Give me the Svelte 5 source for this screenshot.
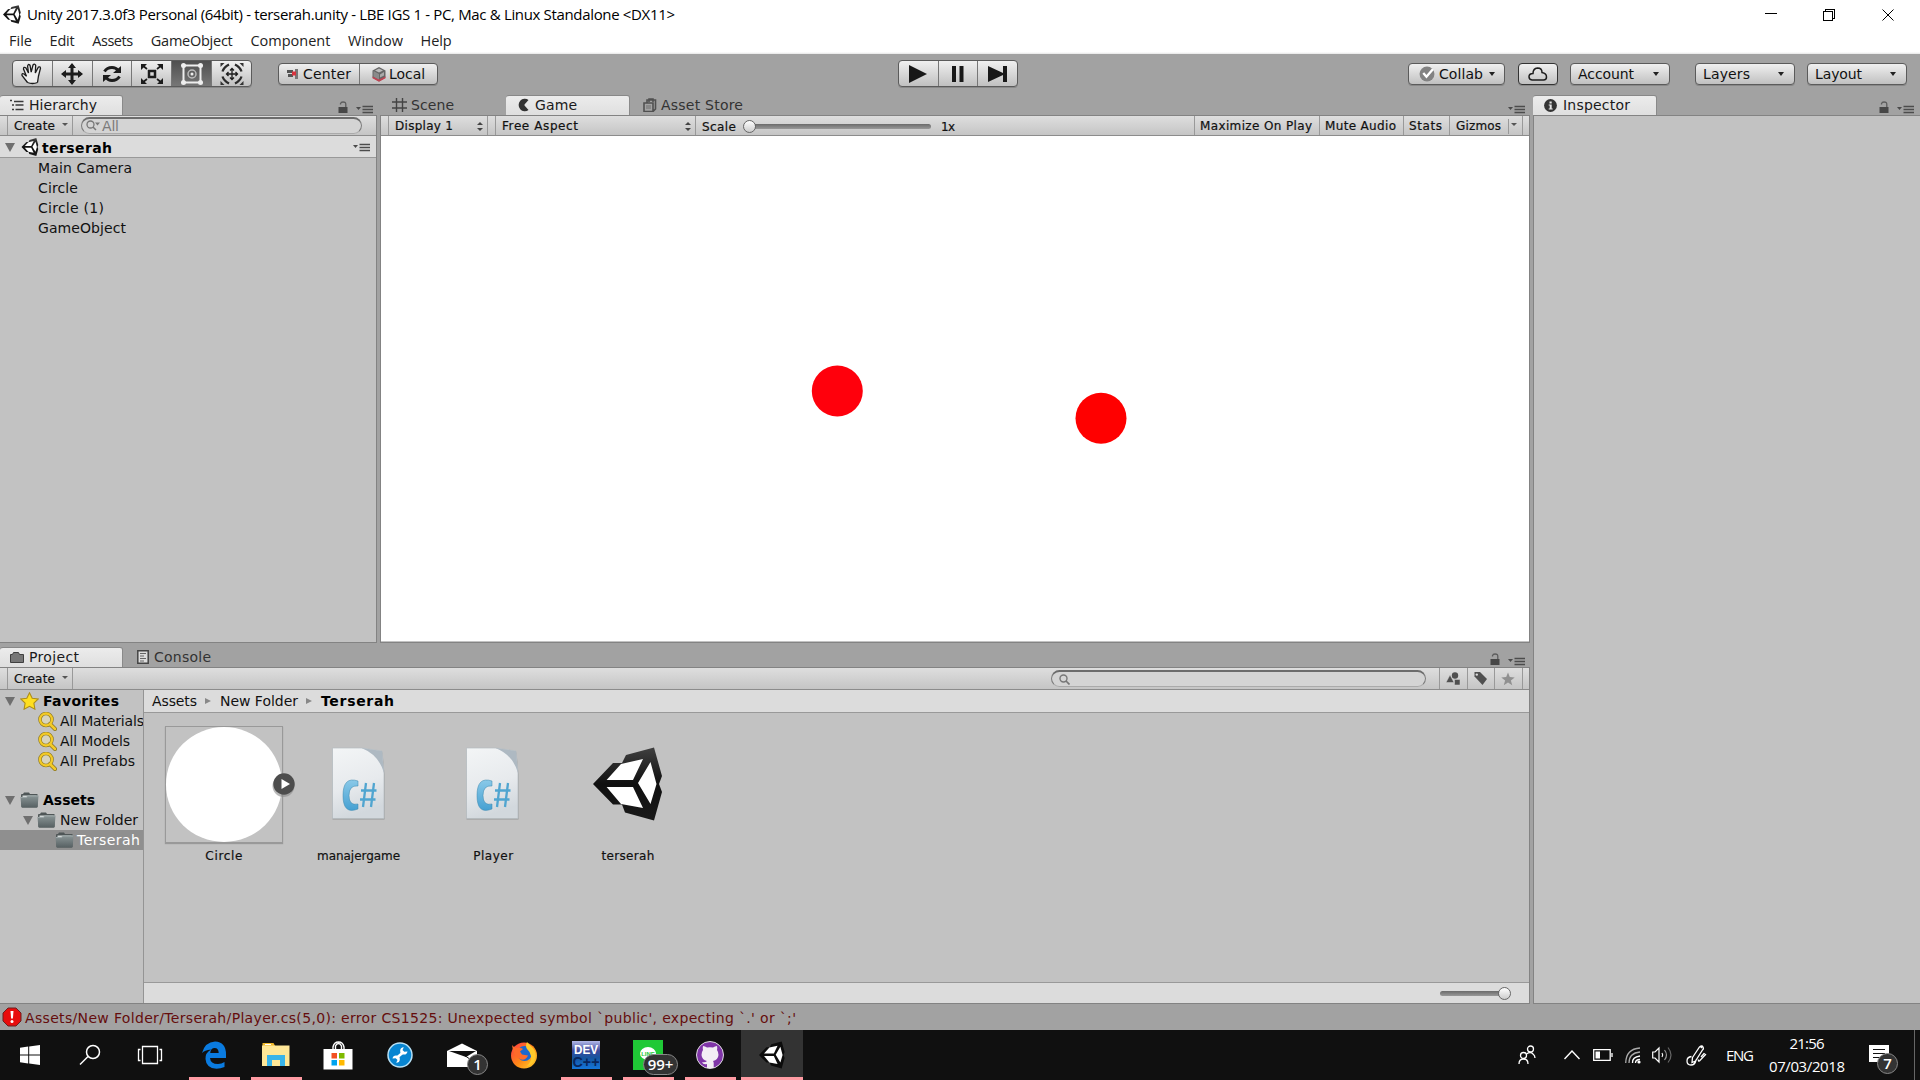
<script>
  // Spreads a label's letters so that it occupies the given width.
  function fit(node, width) {
    const count = [...node.textContent].length;
    const natural = node.getBoundingClientRect().width;
    if (count > 1) node.style.letterSpacing = `${(width - natural) / (count - 1)}px`;
    node.style.width = `${width}px`;
  }

  const menus = [['File', 23], ['Edit', 25], ['Assets', 41], ['GameObject', 82], ['Component', 80], ['Window', 55], ['Help', 31]];
  const tools = ['hand', 'move', 'rotate', 'scale', 'rect', 'transform'];
  const objects = [['Main Camera', 94], ['Circle', 40], ['Circle (1)', 66], ['GameObject', 88]];
  const searches = [['All Materials', 84], ['All Models', 70], ['All Prefabs', 75]];
  const assets = [
    ['Circle', 37, 'sprite'],
    ['manajergame', 83, 'script'],
    ['Player', 40, 'script'],
    ['terserah', 53, 'scene']
  ];
  const playIcons = ['play', 'pause', 'step'];
</script>

{#snippet label(text, width, cls = '')}
  <span class="label {cls}" use:fit={width}>{text}</span>
{/snippet}

{#snippet logo(cls)}
  <svg class={cls} viewBox="0 0 70 74">
    <defs><linearGradient id="logoShade" x1="0" y1="0" x2="0" y2="1"><stop offset="0" stop-color="#404040" /><stop offset=".5" stop-color="#101010" /><stop offset="1" stop-color="#1a1a1a" /></linearGradient></defs>
    <path d="M0 37 20 16h9l4-8L61 .5l8 28.500-3 8 3 8-8 28.500-29-8-3-8h-9z" fill="url(#logoShade)" />
    <path d="M13.600 33 28 17l22-5-10 21zM57.500 15l6 22-6 20L45 36zM13.600 40H40l10 21-22-4z" fill="#fff" />
  </svg>
{/snippet}

{#snippet paneMenu()}
  <svg class="pane-menu" width="17" height="9" viewBox="0 0 17 9"><path d="M0 2h5L2.500 5z" fill="#4a4a4a" /><path d="M6.500 1.500H17M6.500 4.500H17M6.500 7.500H17" stroke="#4c4c4c" stroke-width="1.400" /></svg>
{/snippet}

{#snippet lock()}
  <svg class="lock" width="10" height="12" viewBox="0 0 10 12"><path d="M.5 6h9v6h-9z" fill="#474747" /><path d="M2.500 3.500V2.600Q3 1 5 1q2.800 0 2.800 2.500V6" fill="none" stroke="#5c5c5c" stroke-width="1.300" /></svg>
{/snippet}

{#snippet folder(cls)}
  <svg class={cls} width="19" height="16" viewBox="0 0 19 16"><path d="M1 3q0-1 1-1h1l1-1.500h5L10 2h7.500v12.500q0 1-1 1H2.500q-1 0-1-1z" fill="#4f5657" /><path d="M2.500 3.500h14v2h-14z" fill="#d2d8d8" /><path d="M.5 5h6l1-1.500h11l-.8 11q0 1-1 1H2.300q-1 0-1-1z" fill="url(#folderFill)" /><path d="M1 5.500h5.700l1-1.500h10.300" fill="none" stroke="#a8b1b2" stroke-width=".7" /></svg>
{/snippet}

<div class="screen">
  <svg class="defs" width="0" height="0"><defs>
    <linearGradient id="folderFill" x1="0" y1="0" x2="0" y2="1"><stop offset="0" stop-color="#8b9697" /><stop offset="1" stop-color="#566062" /></linearGradient>
    <linearGradient id="paper" x1="0" y1="0" x2=".25" y2="1"><stop offset="0" stop-color="#f3f5f6" /><stop offset=".6" stop-color="#e7eaed" /><stop offset="1" stop-color="#d2d8dd" /></linearGradient>
    <linearGradient id="sharp" x1="0" y1="0" x2="0" y2="1"><stop offset="0" stop-color="#8ac9e8" /><stop offset="1" stop-color="#45a0d2" /></linearGradient>
    <linearGradient id="fox" x1="0" y1="0" x2="1" y2="1"><stop offset="0" stop-color="#ff3647" /><stop offset=".55" stop-color="#ff8a16" /><stop offset="1" stop-color="#ffd52e" /></linearGradient>
    <linearGradient id="dev" x1="0" y1="0" x2="0" y2="1"><stop offset="0" stop-color="#b3b9e8" /><stop offset=".35" stop-color="#3d4a9c" /><stop offset=".6" stop-color="#16559f" /><stop offset="1" stop-color="#1476da" /></linearGradient>
  </defs></svg>

  <header class="titlebar">
    {@render logo('app-logo')}
    {@render label('Unity 2017.3.0f3 Personal (64bit) - terserah.unity - LBE IGS 1 - PC, Mac & Linux Standalone <DX11>', 648)}
    <svg class="window-buttons" width="130" height="14" viewBox="0 0 130 14" fill="none" stroke="#000" shape-rendering="crispEdges">
      <path d="M0 6.500h12M58.500 4.500h9v9h-9zM60.500 4.500v-2h9v9h-2" /><path d="m117.500 2.500 11 11m0-11-11 11" shape-rendering="auto" />
    </svg>
  </header>
  <nav class="menubar">
    {#each menus as [name, width]}{@render label(name, width)}{/each}
  </nav>

  <div class="toolbar">
    <div class="button-group tools">
      {#each tools as tool}
        <button class:active={tool === 'rect'} aria-label={tool}>
          <svg width="24" height="24" viewBox="0 0 24 24" fill="none" stroke="#1c1c1c" stroke-width="2">
            {#if tool === 'hand'}
              <path d="M7.500 20.500 2 13.500q-.5-2.500 2-1.500l2.500 2.200L3.500 7q0-2.500 2.300-1.200L8.500 11 7.600 4q.4-2.500 2.400-.8l1.200 7L13 3q1.500-2 2.700.2L15.300 11l3-5.800q2-1 2.200 1L18.500 14l-1 6.500M7.500 20.500q5 2 10 0" stroke-width="1.300" fill="#ededed" />
            {:else if tool === 'move'}
              <path d="M12 3v18M3 12h18" stroke-width="3" /><path d="m12 1 4 5H8zM12 23l-4-5h8zM1 12l5-4v8zM23 12l-5 4V8z" fill="#1c1c1c" stroke="none" />
            {:else if tool === 'rotate'}
              <path d="M4.500 9.500Q7 5.500 12 5.500q4 0 6 3M19.500 14.500Q17 18.500 12 18.500q-4 0-6-3" stroke-width="3" /><path d="M21 4v7h-8zM3 20v-7h8z" fill="#1c1c1c" stroke="none" />
            {:else if tool === 'scale'}
              <path d="M9 9h6v6H9z" stroke-width="2.500" /><path d="m2 3 5 4M22 3l-5 4M2 21l5-4M22 21l-5-4" stroke-width="1.700" /><path d="M1 2h6L1 8zM23 2v6l-6-6zM1 22v-6l6 6zM23 22h-6l6-6z" fill="#1c1c1c" stroke="none" />
            {:else if tool === 'rect'}
              <path d="M3.500 3.500h17v17h-17z" stroke="#eee" /><circle cx="12" cy="12" r="4" stroke="#bbb" stroke-width="1.500" /><circle cx="12" cy="12" r="1.500" fill="#eee" stroke="none" /><g fill="#eee" stroke="none"><circle cx="3.500" cy="3.500" r="2.500" /><circle cx="20.500" cy="3.500" r="2.500" /><circle cx="3.500" cy="20.500" r="2.500" /><circle cx="20.500" cy="20.500" r="2.500" /></g>
            {:else}
              <path d="M12 6.500v11M6.500 12h11M10 8.500l2-2 2 2M10 15.500l2 2 2-2M8.500 10l-2 2 2 2M15.500 10l2 2-2 2" stroke-width="1.300" /><path d="M2.500 9.500Q4 5 9 2.500M15 2.500q5 2.500 6.500 7M21.500 14.500q-1.500 4.500-6.500 7M9 21.500q-5-2.500-6.500-7" stroke-width="2.300" stroke="#2b2b2b" /><path d="M.5 1h4l-4 4zM23.500 1v4l-4-4zM.5 23v-4l4 4zM23.500 23h-4l4-4z" fill="#333" stroke="none" />
            {/if}
          </svg>
        </button>
      {/each}
    </div>
    <div class="button-group pivots">
      <button>
        <svg width="13" height="12" viewBox="0 0 13 12"><path d="M0 2h6v3H0zM1 6h5v3H1z" fill="#555" /><path d="M8 1h3v10H8z" fill="#777" /><path d="M5 3.500h4v4H5z" fill="#d8333e" /></svg>
        {@render label('Center', 48)}
      </button>
      <button>
        <svg width="14" height="15" viewBox="0 0 14 15"><path d="m7 0 6.500 3.500v7L7 14.500.5 10.500v-7z" fill="#666" /><path d="M1.500 4 7 7v6L1.500 9.800z" fill="#8a8a8a" /><path d="M3 3.500 7 1.500l4 2-4 2z" fill="#bbb" /><path d="M8 7.500 12 5v3.500L8 10.500z" fill="#aaa" /><path d="m.5 9.500 6.500 3 6.500-3v1.700L7 14.700.5 11.200z" fill="#bf4453" /></svg>
        {@render label('Local', 36)}
      </button>
    </div>
    <div class="button-group play">
      {#each playIcons as name}
        <button aria-label={name}>
          <svg width="22" height="20" viewBox="0 0 22 20" fill="#181818">
            {#if name === 'play'}<path d="m2 1 18 9-18 9z" />
            {:else if name === 'pause'}<path d="M5 2h4v16H5zM12.500 2h4v16h-4z" />
            {:else}<path d="M1 2v16l15-7v7h4V2h-4v7z" />{/if}
          </svg>
        </button>
      {/each}
    </div>
    <div class="account-tools">
      <button class="popup collab">
        <svg width="16" height="16" viewBox="0 0 15 15"><circle cx="7.500" cy="7.500" r="7" fill="#828282" /><path d="m4 6.500 3 3.500 6-7" fill="none" stroke="#fff" stroke-width="2.200" /></svg>
        {@render label('Collab', 44)}<i class="caret"></i>
      </button>
      <button class="popup cloud" aria-label="Cloud"><svg width="20" height="14" viewBox="0 0 20 14"><path d="M4 13q-3-.5-3-3.300 0-3 4-3.200 0-5 4.500-5.500Q14 1 14 5.500q4.500.8 4.500 4.500 0 3-3 3z" fill="none" stroke="#1d1d1d" stroke-width="1.500" /></svg></button>
      <button class="popup account">{@render label('Account', 56)}<i class="caret"></i></button>
      <button class="popup layers">{@render label('Layers', 47)}<i class="caret"></i></button>
      <button class="popup layout">{@render label('Layout', 47)}<i class="caret"></i></button>
    </div>
  </div>

  <main class="workspace">
    <div class="left">
      <div class="upper">
        <section class="panel hierarchy">
          <div class="tabs">
            <div class="tab active"><svg width="14" height="12" viewBox="0 0 14 12" stroke="#3a3a3a" stroke-width="1.400"><path d="M0 1.500h2M4 2.500h9.500M2 6h2M5.500 6h8M2 10.500h2M5.500 10.500h8" /></svg>{@render label('Hierarchy', 68)}</div>
            <div class="pane-tools">{@render lock()}{@render paneMenu()}</div>
          </div>
          <div class="body">
            <div class="strip">
              <span class="create">{@render label('Create', 41, 'small')}<i class="caret tiny"></i></span>
              <div class="search-field"><svg width="14" height="11" viewBox="0 0 14 11"><circle cx="4.500" cy="4.500" r="3.500" fill="none" stroke="#777" stroke-width="1.300" /><path d="m7 7 3 3" stroke="#777" stroke-width="1.500" /><path d="M9 2.500h5l-2.500 3z" fill="#777" /></svg>{@render label('All', 17)}</div>
            </div>
            <div class="scene-row"><i class="fold"></i>{@render logo('scene-logo')}{@render label('terserah', 70, 'bold')}{@render paneMenu()}</div>
            <div class="objects">{#each objects as [name, width]}<div class="row">{@render label(name, width)}</div>{/each}</div>
          </div>
        </section>

        <section class="panel game">
          <div class="tabs">
            <div class="tab scene-tab"><svg width="15" height="14" viewBox="0 0 15 14"><path d="M4.500 0v14M10.500 0v14M0 4h15M0 10h15" stroke="#444" stroke-width="1.400" /></svg>{@render label('Scene', 43)}</div>
            <div class="tab active game-tab"><svg width="12" height="14" viewBox="0 0 12 14"><path d="M10.500 2A6.200 6.200 0 1 0 10.500 12L6.500 7.500V6.500z" fill="#333" /></svg>{@render label('Game', 42)}</div>
            <div class="tab store-tab"><svg width="14" height="14" viewBox="0 0 14 14"><path d="M1 5h9v8.500H1zM4 5V2h8.500v9L10 13.500M6 4V1h4v3" fill="none" stroke="#505050" stroke-width="1.600" /><path d="M3 7h5v4H3z" fill="#888" /></svg>{@render label('Asset Store', 82)}</div>
            <div class="pane-tools">{@render paneMenu()}</div>
          </div>
          <div class="body">
            <div class="strip">
              <span class="cell display">{@render label('Display 1', 58, 'small')}<i class="updown"></i></span>
              <span class="cell aspect">{@render label('Free Aspect', 76, 'small')}<i class="updown"></i></span>
              <span class="cell zoom">{@render label('Scale', 34, 'small')}<i class="slider"><b></b></i>{@render label('1x', 14, 'small')}</span>
              <span class="cell maximize">{@render label('Maximize On Play', 112, 'small')}</span>
              <span class="cell mute">{@render label('Mute Audio', 71, 'small')}</span>
              <span class="cell stats">{@render label('Stats', 33, 'small')}</span>
              <span class="cell gizmos">{@render label('Gizmos', 45, 'small')}<i class="split"></i><i class="caret tiny"></i></span>
              <span class="cell"></span>
            </div>
            <svg class="viewport" width="1148" height="505" viewBox="381 136 1148 505"><g fill="#f00"><circle cx="837.300" cy="391" r="25.500" fill="#ff000c" /><circle cx="1101" cy="418.200" r="25.500" /></g></svg>
          </div>
        </section>
      </div>

      <section class="panel project">
        <div class="tabs">
          <div class="tab active"><svg width="14" height="11" viewBox="0 0 14 11"><path d="M.5 2.500h2l1-2h5l1 2h4v8H.5z" fill="#777" stroke="#404040" /></svg>{@render label('Project', 50)}</div>
          <div class="tab console-tab"><svg width="12" height="14" viewBox="0 0 12 14"><path d="M.8.8h10.400v12.400H.8z" fill="#ddd" stroke="#444" stroke-width="1.500" /><path d="M3 3.500h6M3 6h4M3 8.500h6M3 11h4" stroke="#666" /></svg>{@render label('Console', 57)}</div>
          <div class="pane-tools">{@render lock()}{@render paneMenu()}</div>
        </div>
        <div class="body">
          <div class="strip">
            <span class="create">{@render label('Create', 41, 'small')}<i class="caret tiny"></i></span>
            <div class="search-field"><svg width="11" height="11" viewBox="0 0 11 11"><circle cx="4.500" cy="4.500" r="3.500" fill="none" stroke="#777" stroke-width="1.400" /><path d="m7 7 3.500 3.500" stroke="#777" stroke-width="1.700" /></svg></div>
            <span class="filter"><svg width="15" height="14" viewBox="0 0 15 14" fill="#505050"><circle cx="9" cy="3.500" r="3.200" /><path d="M0 10.500 4 3l4 7.500zM8.500 7.500h5.500V13H8.500z" stroke="#d0d0d0" stroke-width=".5" /></svg></span>
            <span class="filter"><svg width="15" height="15" viewBox="0 0 15 15"><path d="M1.500 1H7l7 7-4.500 6-8-8.500z" fill="#505050" /><circle cx="3.800" cy="3.600" r="1.200" fill="#ddd" /></svg></span>
            <span class="filter"><svg width="14" height="14" viewBox="0 0 14 14"><path d="m7 .5 1.800 4.600 4.900.3-3.800 3.100 1.300 4.800L7 10.600l-4.200 2.700 1.300-4.800L.3 5.400l4.900-.3z" fill="#909090" /></svg></span>
            <span class="filter last"></span>
          </div>
          <div class="browser">
            <aside class="tree">
              <div class="row bold-row"><i class="fold"></i><svg width="19" height="18" viewBox="0 0 19 18"><path d="m9.500.8 2.700 5.400 6 .8-4.300 4.200 1 6-5.400-2.900-5.400 2.900 1-6L.8 7l6-.8z" fill="#ffdf20" stroke="#ad8d1c" stroke-width="1.100" /></svg>{@render label('Favorites', 76, 'bold')}</div>
              {#each searches as [name, width]}
                <div class="row saved"><svg width="19" height="19" viewBox="0 0 19 19"><circle cx="8" cy="7.500" r="6" fill="#d8d4bd" stroke="#8a7620" stroke-width="3.500" /><path d="m12 12 5 5" stroke="#8a7620" stroke-width="4" stroke-linecap="round" /><circle cx="8" cy="7.500" r="6" fill="none" stroke="#f3ca27" stroke-width="2.300" /><path d="m12 12 5 5" stroke="#f3ca27" stroke-width="2.500" stroke-linecap="round" /></svg>{@render label(name, width)}</div>
              {/each}
              <div class="row bold-row root"><i class="fold"></i>{@render folder('dir')}{@render label('Assets', 52, 'bold')}</div>
              <div class="row level-one"><i class="fold"></i>{@render folder('dir')}{@render label('New Folder', 78)}</div>
              <div class="row level-two selected">{@render folder('dir')}{@render label('Terserah', 63)}</div>
            </aside>
            <div class="content">
              <div class="crumbs">{@render label('Assets', 45)}<i></i>{@render label('New Folder', 78)}<i></i>{@render label('Terserah', 73, 'bold')}</div>
              <div class="grid">
                {#each assets as [name, width, kind]}
                  <figure>
                    <div class="thumb">
                      {#if kind === 'sprite'}
                        <div class="sprite"><div class="disc"></div><svg class="expand" width="26" height="28" viewBox="0 0 26 28"><circle cx="12.500" cy="14" r="11" fill="#888" opacity=".6" /><circle cx="13" cy="12" r="10.700" fill="#4d4d4d" /><path d="m10.500 7 8.500 5-8.500 5z" fill="#fff" /></svg></div>
                      {:else if kind === 'script'}
                        <svg class="script" width="56" height="74" viewBox="0 0 56 74"><path d="M1.500 1.500h29l21 3 2 22v45h-52z" fill="#777" opacity=".55" transform="translate(0 1)" /><path d="M1.500 1h29l20.500 3 2 22v45.500H1.500z" fill="url(#paper)" stroke="#b5bbc0" stroke-width=".7" /><path d="M30.500 1 51 4l2 22q-5-18-22.500-25z" fill="#aeb9c2" /><path d="M27 34q-15-5-15 14.500T27 62v-5q-9 2-9-8.500T27 39z" fill="url(#sharp)" stroke="#3b86ad" stroke-width=".5" /><path d="m35 36-3 24m11-24-3 24M30 43.500h15.500M29 52.500h15.500" stroke="#50a5d0" stroke-width="2.300" fill="none" /></svg>
                      {:else}{@render logo('scene-file')}{/if}
                    </div>
                    <figcaption>{@render label(name, width, 'small')}</figcaption>
                  </figure>
                {/each}
              </div>
              <div class="size-bar"><i class="slider"><b></b></i></div>
            </div>
          </div>
        </div>
      </section>
    </div>

    <section class="panel inspector">
      <div class="tabs">
        <div class="tab active"><svg width="13" height="13" viewBox="0 0 13 13"><circle cx="6.500" cy="6.500" r="6.400" fill="#333" /><path d="M5.500 2.500h2.200v2H5.500zM4.700 5.500h3v4h1v1h-4v-1h1v-3h-1z" fill="#e5e5e5" /></svg>{@render label('Inspector', 67)}</div>
        <div class="pane-tools">{@render lock()}{@render paneMenu()}</div>
      </div>
      <div class="body"></div>
    </section>
  </main>

  <div class="status">
    <svg width="20" height="20" viewBox="0 0 20 20"><path d="M6 1h8l5 5v8l-5 5H6l-5-5V6z" fill="#e80d0d" stroke="#6d2020" /><path d="M8.500 4h3l-.6 7.500H9.100z" fill="#fff" /><circle cx="10" cy="14.500" r="1.500" fill="#fff" /></svg>
    {@render label("Assets/New Folder/Terserah/Player.cs(5,0): error CS1525: Unexpected symbol `public', expecting `.' or `;'", 771)}
  </div>

  <footer class="taskbar">
    <div class="apps">
      <span class="app start"><svg width="20" height="20" viewBox="0 0 20 20" fill="#fff"><path d="m0 2.700 8.200-1.100v7.900H0zM9.200 1.400 20 0v9.500H9.200zM0 10.500h8.200v7.900L0 17.300zM9.200 10.500H20V20L9.200 18.600z" /></svg></span>
      <span class="app"><svg width="22" height="22" viewBox="0 0 22 22" fill="none" stroke="#fff" stroke-width="1.500"><circle cx="14" cy="8" r="6.500" /><path d="m9 12.500-8 8" /></svg></span>
      <span class="app"><svg width="26" height="20" viewBox="0 0 26 20" fill="none" stroke="#fff"><path d="M5.500 1.500h15v17h-15zM3.500 4.500h-2v11h2M22.500 4.500h2v11h-2" stroke-width="1.300" /></svg></span>
      <span class="app open"><svg width="26" height="28" viewBox="0 0 26 28"><path d="M1 12Q4 1 14 .5q11 .5 11 13V17H9q.5 6 8 6 3.500 0 6.500-2v5q-4 1.800-8 1.800Q5 27 4.500 18 4 12 10 8.500 3.500 9 1 12zm8.200 0h8.500q-.2-5-4-5-4 0-4.500 5z" fill="#0a7be0" /></svg></span>
      <span class="app open"><svg width="28" height="24" viewBox="0 0 28 24"><path d="M.5 0h11l2 3.500V8H.5z" fill="#f0b92c" /><path d="M0 2.500h27.500V23H0z" fill="#ffe797" /><path d="M3 1.500h6" stroke="#fff" /><path d="M5 23V12h18v11h-5v-6h-8v6z" fill="#3ab4e9" /></svg></span>
      <span class="app"><svg width="30" height="30" viewBox="0 0 30 30"><path d="M.5 9h29v20.500H.5z" fill="#fff" /><path d="M10 9V7q1-5 5.500-5T21 7v2M12.500 9V6q1-2.500 3-2.500T18.500 6v3" fill="none" stroke="#fff" stroke-width="1.400" /><path d="M8.500 13H14v5.500H8.500z" fill="#f25022" /><path d="M16 13h5.500v5.500H16z" fill="#7fba00" /><path d="M8.500 20H14v5.500H8.500z" fill="#00a4ef" /><path d="M16 20h5.500v5.500H16z" fill="#ffb900" /></svg></span>
      <span class="app"><svg width="26" height="26" viewBox="0 0 26 26"><circle cx="13" cy="13" r="12" fill="#0885d1" stroke="#b6e0f6" stroke-width="1.500" /><path d="m9.500 16 7-6" stroke="#fff" stroke-width="2.500" /><path d="M20.500 9.500a3.700 3.700 0 1 1-3.700-4.300l-1.300 2.800 1.800 1.800zM5.500 16.500a3.700 3.700 0 1 1 3.700 4.300l1.300-2.800-1.800-1.800z" fill="#fff" /></svg></span>
      <span class="app"><svg width="30" height="25" viewBox="0 0 30 25"><path d="M0 8 15 .5 30 8v16H0z" fill="#fff" /><path d="M2 8h27l-10 6z" fill="#101010" /><path d="m17 12 13 9" stroke="#101010" /></svg><b class="badge">1</b></span>
      <span class="app"><svg width="28" height="28" viewBox="0 0 28 28"><circle cx="14" cy="14.500" r="13" fill="url(#fox)" /><circle cx="14.500" cy="12.500" r="7.500" fill="#1b68d0" /><path d="M2 4q2 3 6 3 4-.5 5 1l-3 2.500 2 3 6 1q-2 5-7 4Q3 16 2 4z" fill="#ff6b2a" /><path d="M17 1q3 3 6 6 4 5 2 11-2 6-8 7 5-5 4-10-.5-4-4-7-2-3 0-7z" fill="#ffca2b" /></svg></span>
      <span class="app open"><svg width="28" height="28" viewBox="0 0 28 28"><path d="M0 0h28v28H0z" fill="url(#dev)" /><text x="14" y="13" text-anchor="middle" fill="#fff" textLength="24" lengthAdjust="spacingAndGlyphs" font-family="Liberation Sans" font-weight="700" font-size="13">DEV</text><text x="14" y="26" text-anchor="middle" fill="#09265d" textLength="27" lengthAdjust="spacingAndGlyphs" font-family="Liberation Sans" font-weight="700" font-size="14">C++</text></svg></span>
      <span class="app open"><svg width="30" height="30" viewBox="0 0 30 30"><path d="M0 0h30v30H0z" fill="#1fc936" /><ellipse cx="15" cy="13.500" rx="8" ry="6.500" fill="#fff" /><path d="m12 18 3 4 4-4z" fill="#fff" /><text x="15" y="16" text-anchor="middle" fill="#1fc936" font-family="Liberation Sans" font-weight="700" font-size="6">LINE</text></svg><b class="badge wide">99+</b></span>
      <span class="app open"><svg width="28" height="28" viewBox="0 0 28 28"><circle cx="14" cy="14" r="13.500" fill="#8035a8" stroke="#ddd" stroke-width="1" /><path d="M11 27v-4q-4 1-5-2 3 1 5-1-5-1-5.500-6 0-3 1.500-5-.5-2 0-4 2 0 4 1.500 3-.7 6 0 2-1.500 4-1.500.5 2 0 4 1.500 2 1.500 5-.5 5-5.500 6 .7 1 .7 2v5z" fill="#f3edf5" /></svg></span>
      <span class="app open current">
        <svg width="26" height="28" viewBox="0 0 70 74"><path d="M0 37 20 16h9l4-8L61 .5l8 28.500-3 8 3 8-8 28.500-29-8-3-8h-9z" fill="#0c0c0c" /><path d="M13.600 33 28 17l22-5-10 21zM57.500 15l6 22-6 20L45 36zM13.600 40H40l10 21-22-4z" fill="#fff" /></svg>
      </span>
    </div>
    <div class="tray">
      <svg width="18" height="20" viewBox="0 0 18 20" fill="none" stroke="#fff" stroke-width="1.300"><circle cx="12.500" cy="4" r="3" /><circle cx="5.500" cy="10.500" r="3" /><path d="M1 19q0-5 4.500-5t4.500 5M8.500 9q4-3 6.500 0 2 1.500 2 4" /></svg>
      <svg width="16" height="10" viewBox="0 0 16 10" fill="none" stroke="#fff" stroke-width="1.400"><path d="m.5 9 7.500-8 7.500 8" /></svg>
      <svg width="20" height="12" viewBox="0 0 20 12" fill="none" stroke="#fff"><path d="M.7.700h16.500v10.600H.7zM19 4v4" stroke-width="1.300" /><path d="M2.500 2.500h4.500v7H2.500z" fill="#fff" stroke="none" /></svg>
      <svg width="16" height="17" viewBox="0 0 16 17" fill="none" stroke="#aaa" stroke-width="1.300"><path d="M.7 16Q1 2 15 1M4 16Q4 6 15 5" /><path d="M7.500 16Q7 10 15 9M10.500 16q0-3.500 4.500-3.500" stroke="#fff" /><circle cx="14" cy="15" r="1.600" fill="#fff" stroke="none" /></svg>
      <svg width="20" height="18" viewBox="0 0 20 18" fill="none" stroke="#fff" stroke-width="1.200"><path d="M.7 6H3l4-4v14l-4-4H.7z" /><path d="M10 7q1.500 2 0 4" /><path d="M12.500 4q4 5 0 10" stroke="#999" /><path d="M16 1.500q6 7.500 0 15" stroke="#666" /></svg>
      <svg width="21" height="21" viewBox="0 0 21 21" fill="none" stroke="#fff" stroke-width="1.300"><path d="m6.500 12.500 7-10.500q2.500-2 3.500 0t-.5 3L9.500 16l-3.500 1.500zM14 1l2 2M5.500 11.500Q1 12 1 16t4 4q4 0 5-5M12.500 14.500q-.5 2 1 1.500l6-6.500-1.500-1-3 3.500" /></svg>
      {@render label('ENG', 28)}
      <div class="clock">{@render label('21:56', 35)}{@render label('07/03/2018', 76)}</div>
      <span class="notify"><svg width="20" height="21" viewBox="0 0 20 21"><path d="M0 0h20v17h-6l-4 4v-4H0z" fill="#fff" /><path d="M4 4.500h12M4 8.500h12M4 12.500h8" stroke="#111" stroke-width="1.200" /></svg><b class="badge">7</b></span>
      <i class="peek"></i>
    </div>
  </footer>
</div>

<style>
  :global(body) { margin: 0; overflow: hidden; }
  .screen { width: 1920px; height: 1080px; display: flex; flex-direction: column; background: #a2a2a2; color: #111; font: 14px/20px 'DejaVu Sans', sans-serif; overflow: hidden; }
  .screen * { box-sizing: border-box; }
  svg { flex: none; display: block; }
  .defs { position: absolute; }
  button { font: inherit; color: inherit; padding: 0; margin: 0; border: 0; background: none; }
  .label { display: inline-block; flex: none; white-space: nowrap; }
  .small { font-size: 12px; -webkit-text-stroke: .2px #111; }
  .bold { font-weight: 700; color: #000; }

  .titlebar { height: 28px; flex: none; display: flex; align-items: center; background: #fff; color: #000; font: 15px/28px 'Open Sans', sans-serif; padding-left: 3px; }
  .titlebar .label { margin-left: 6px; }
  :global(.app-logo) { width: 18px; height: 19px; }
  .window-buttons { margin: -1px 25px 0 auto; }
  .menubar { height: 26px; flex: none; display: flex; gap: 17.600px; padding-left: 9px; background: linear-gradient(#fff 24px, #e6e6e6); color: #222; font: 14.500px/26px 'Open Sans', sans-serif; }

  .toolbar { height: 41px; flex: none; display: flex; align-items: flex-start; padding: 6px 13px 0 12px; }
  .button-group, .popup { border: 1px solid #5b5b5b; border-radius: 4px; background: linear-gradient(#f0f0f0, #c0c0c0); box-shadow: 0 1px 0 #888; }
  .button-group { display: flex; overflow: hidden; }
  .button-group button { display: flex; align-items: center; justify-content: center; }
  .button-group button + button { border-left: 1px solid #777; }
  .tools { width: 240px; height: 27px; }
  .tools button { flex: 1; }
  .tools .active { background: linear-gradient(#4f4f4f, #777); }
  .pivots { width: 160px; height: 22px; margin: 3px 0 0 26px; }
  .pivots button:first-child { width: 80px; gap: 3px; }
  .pivots button:last-child { width: 78px; gap: 3px; }
  .play { width: 120px; height: 27px; margin-left: 460px; }
  .play button { flex: 1; }
  .account-tools { display: flex; margin: 3px 0 0 auto; }
  .popup { height: 22px; display: flex; align-items: center; padding: 0 10px 0 7px; }
  .popup .caret { margin-left: auto; }
  .collab { width: 97px; gap: 4px; padding-left: 10px; padding-right: 9px; }
  .cloud { width: 40px; margin-left: 13px; padding: 0; justify-content: center; border-color: #333; }
  .account { width: 100px; margin-left: 12px; }
  .layers { width: 100px; margin-left: 25px; }
  .layout { width: 100px; margin-left: 12px; }
  .caret { border: 3px solid transparent; border-top: 4.500px solid #222; border-bottom: 0; flex: none; }
  .caret.tiny { border-width: 3.500px 3px 0; border-top-color: #555; margin-top: -4px; }

  .workspace { height: 909px; flex: none; display: flex; }
  .left { width: 1530px; display: flex; flex-direction: column; gap: 4px; }
  .upper { height: 548px; display: flex; gap: 3px; }
  .panel { display: flex; flex-direction: column; min-width: 0; }
  .tabs { height: 20px; flex: none; display: flex; color: #333; }
  .tab { display: flex; align-items: center; gap: 4px; }
  .tab.active { padding-bottom: 1px; color: #1a1a1a; background: linear-gradient(#ececec, #dfdfdf); border-top: 1px solid #888; border-right: 1px solid #8a8a8a; border-radius: 3px 3px 0 0; }
  .pane-tools { display: flex; margin-left: auto; align-items: flex-end; padding-bottom: 1px; gap: 8px; }
  .pane-tools :global(.lock) { margin-bottom: 1px; }
  .body { flex: 1; min-height: 0; background: #c2c2c2; border: 1px solid #838383; display: flex; flex-direction: column; }
  .strip { height: 20px; flex: none; display: flex; align-items: center; background: linear-gradient(#dedede, #c5c5c5); border-bottom: 1px solid #8c8c8c; }
  .hierarchy { width: 377px; }
  .hierarchy .body { border-left: 0; }
  .hierarchy .tab { width: 123px; padding-left: 10px; gap: 5px; }
  .hierarchy .pane-tools { padding-right: 4px; }
  .create { display: flex; align-items: center; justify-content: space-between; align-self: stretch; margin-left: 7px; width: 66px; border: 1px solid #999; border-width: 0 1px; padding: 1px 4px 0 6px; }
  .search-field { height: 17px; border: 1px solid #7c7c7c; border-top: 2px solid #6c6c6c; border-bottom-color: #aaa; border-radius: 9px; background: #d4d4d4; display: flex; align-items: center; color: #7b7b7b; }
  .hierarchy .search-field { width: 281px; margin-left: 8px; padding: 0 0 1px 4px; gap: 2px; }
  .scene-row { display: flex; align-items: center; height: 22px; background: #dcdcdc; border-bottom: 1px solid #999; padding: 1px 6px 0 5px; }
  .scene-row .label { padding-top: 1px; }
  :global(.scene-logo) { width: 18px; height: 18px; margin: 0 3px 0 6px; }
  .scene-row :global(.pane-menu) { margin-left: auto; }
  .fold { border: 5.500px solid transparent; border-top: 9px solid #6f6f6f; border-bottom: 0; flex: none; }
  .objects { padding-left: 38px; }
  .row { height: 20px; display: flex; align-items: center; }

  .game { width: 1150px; }
  .scene-tab { margin-left: 12px; }
  .game-tab { width: 124px; margin-left: 52px; padding-left: 12px; gap: 5px; }
  .store-tab { margin-left: 13px; }
  .game .pane-tools { padding-right: 5px; }
  .game .strip { padding-left: 7px; }
  .cell { display: flex; align-items: center; align-self: stretch; border-left: 1px solid #999; padding-top: 1px; }
  .display { width: 100px; padding: 1px 4px 0 6px; border-right: 1px solid #999; justify-content: space-between; }
  .aspect { width: 201px; margin-left: 7px; padding: 1px 4px 0 6px; border-right: 1px solid #999; justify-content: space-between; }
  .zoom { border: 0; padding: 2px 0 0 6px; }
  .updown { width: 6px; height: 9px; position: relative; }
  .updown::before, .updown::after { content: ''; position: absolute; left: 0; border: 3px solid transparent; }
  .updown::before { top: 0; border-top: 0; border-bottom: 3.500px solid #444; }
  .updown::after { bottom: 0; border-bottom: 0; border-top: 3.500px solid #444; }
  .slider { height: 5px; border-radius: 3px; background: linear-gradient(#6b6b6b, #999); position: relative; }
  .slider b { position: absolute; top: -4px; width: 13px; height: 13px; border: 1.500px solid #666; border-radius: 50%; background: linear-gradient(#fff, #ccc); }
  .zoom .slider { width: 182px; margin: 0 10px 0 13px; }
  .zoom .slider b { left: -6px; }
  .maximize { margin-left: auto; width: 125px; padding-left: 5px; }
  .mute { width: 84px; padding-left: 5px; }
  .stats { width: 46px; padding-left: 5px; }
  .gizmos { width: 73px; padding-left: 6px; }
  .split { height: 15px; border-left: 1px solid #999; margin: 0 2px 0 7px; }
  .game .strip > .cell:last-child { width: 7px; }
  .viewport { background: #fff; }

  .project { height: 357px; width: 1530px; }
  .project .body { border-left: 0; }
  .project .tab.active { width: 123px; padding-left: 10px; gap: 5px; }
  .console-tab { margin-left: 14px; gap: 5px; }
  .project .pane-tools { padding-right: 5px; }
  .project .strip { height: 22px; }
  .project .search-field { width: 375px; margin-left: 978px; padding-left: 7px; }
  .filter { width: 27.500px; align-self: stretch; border-left: 1px solid #999; display: flex; align-items: center; justify-content: center; }
  .search-field + .filter { margin-left: 13px; }
  .filter.last { width: 7px; }
  .browser { flex: 1; min-height: 0; display: flex; }
  .tree { width: 144px; flex: none; border-right: 1px solid #949494; overflow: hidden; padding-top: 1px; }
  .tree .row { padding-left: 38px; gap: 3px; }
  .tree .bold-row { padding-left: 5px; gap: 4px; }
  .tree .bold-row .fold { margin-right: 1px; }
  .tree .root { margin-top: 19px; }
  .tree .level-one { padding-left: 23px; gap: 4px; }
  .tree .level-two { padding-left: 55px; gap: 3px; }
  .selected { background: #8f8f8f; color: #fff; }
  .content { flex: 1; min-width: 0; display: flex; flex-direction: column; }
  .crumbs { height: 23px; display: flex; align-items: center; background: #dcdcdc; border-bottom: 1px solid #999; padding-left: 8px; }
  .crumbs i { margin: 0 9px 0 8px; border: 3.500px solid transparent; border-left: 6px solid #888; border-right: 0; }
  .grid { flex: 1; display: flex; padding: 12px 0 0 12.500px; }
  figure { margin: 0; width: 134.700px; display: flex; flex-direction: column; align-items: center; }
  .thumb { height: 118px; display: flex; align-items: center; justify-content: center; }
  .sprite { width: 118px; height: 117px; border: 1px solid #999; box-shadow: 0 1px 1px #999; position: relative; }
  .disc { width: 116px; height: 115px; border-radius: 50%; background: #fff; }
  .expand { position: absolute; right: -15px; top: 45px; }
  :global(.scene-file) { width: 70px; height: 74px; }
  figcaption { margin-top: 2px; height: 20px; }
  .size-bar { height: 21px; background: #dcdcdc; border-top: 1px solid #999; display: flex; align-items: center; }
  .size-bar .slider { width: 64px; margin-left: auto; margin-right: 25px; }
  .size-bar .slider b { right: -7px; }
  .inspector { width: 387px; margin-left: 3px; }
  .inspector .tab { width: 124px; padding-left: 11px; gap: 6px; }
  .inspector .pane-tools { padding-right: 6px; }
  .inspector .body { border-right: 0; }

  .status { height: 26px; flex: none; display: flex; align-items: center; padding: 0 3px 0 2px; gap: 3px; color: #650d0d; }
  .status .label { padding-top: 2px; }
  .taskbar { height: 50px; flex: none; display: flex; justify-content: space-between; background: #101010; color: #fff; font-family: 'Open Sans', sans-serif; }
  .apps { display: flex; padding-left: 0; }
  .app { width: 62px; height: 50px; display: flex; align-items: center; justify-content: center; position: relative; }
  .app.start { width: 60px; }
  .app:nth-child(n + 2):nth-child(-n + 3) { width: 60px; }
  .app:nth-child(4) { margin-left: 3px; }
  .app.open::after { content: ''; position: absolute; left: 6px; right: 5px; bottom: 0; height: 3px; background: #ff9ba3; }
  .app.current { background: #333; }
  .app.current::after { left: 0; right: 0; }
  .badge { position: absolute; width: 21px; height: 21px; border: 1px solid #888; border-radius: 11px; background: #333; font: 600 15px/19px 'Open Sans', sans-serif; text-align: center; left: 36px; top: 24px; }
  .badge.wide { width: 35px; left: 26px; }
  .tray { display: flex; align-items: center; font-size: 15px; }
  .tray > svg:nth-child(1) { margin-right: 28px; }
  .tray > svg:nth-child(2) { margin-right: 13px; }
  .tray > svg:nth-child(3) { margin-right: 12px; }
  .tray > svg:nth-child(4) { margin-right: 11px; }
  .tray > svg:nth-child(5) { margin-right: 14px; }
  .tray > svg:nth-child(6) { margin-right: 19px; }
  .clock { width: 76px; margin-left: 15px; display: flex; flex-direction: column; align-items: center; line-height: 23px; }
  .notify { position: relative; margin-left: 24px; height: 20px; }
  .notify .badge { left: 8px; top: 8px; }
  .peek { height: 50px; border-left: 1px solid #666; margin-left: 25px; width: 6px; }
</style>
